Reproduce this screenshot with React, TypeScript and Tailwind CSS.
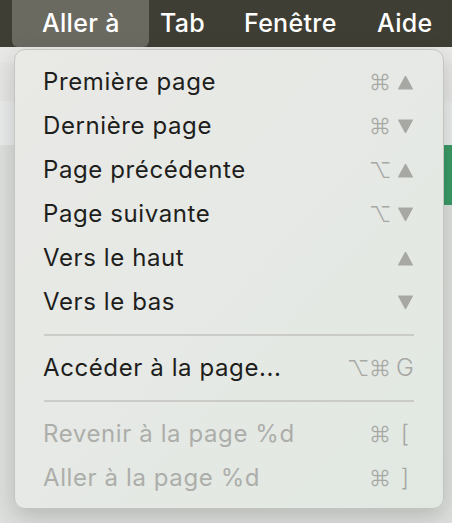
import React from "react";

type Key = "up" | "down" | string;

type Item = {
  label: string;
  mods?: string;
  keyGlyph?: Key;
  disabled?: boolean;
};

const GROUPS: Item[][] = [
  [
    { label: "Première page", mods: "⌘", keyGlyph: "up" },
    { label: "Dernière page", mods: "⌘", keyGlyph: "down" },
    { label: "Page précédente", mods: "⌥", keyGlyph: "up" },
    { label: "Page suivante", mods: "⌥", keyGlyph: "down" },
    { label: "Vers le haut", keyGlyph: "up" },
    { label: "Vers le bas", keyGlyph: "down" },
  ],
  [{ label: "Accéder à la page...", mods: "⌥⌘", keyGlyph: "G" }],
  [
    { label: "Revenir à la page %d", mods: "⌘", keyGlyph: "[", disabled: true },
    { label: "Aller à la page %d", mods: "⌘", keyGlyph: "]", disabled: true },
  ],
];

function Triangle({ down }: { down?: boolean }) {
  return (
    <svg width="17" height="15" viewBox="0 0 17 15" className="fill-[#a7a8a4]">
      {down ? (
        <path d="M1.2 1.5 Q0.4 0.5 1.8 0.5 L15.2 0.5 Q16.6 0.5 15.8 1.5 L9.3 13.6 Q8.5 14.8 7.7 13.6 Z" />
      ) : (
        <path d="M1.2 13.5 Q0.4 14.5 1.8 14.5 L15.2 14.5 Q16.6 14.5 15.8 13.5 L9.3 1.4 Q8.5 0.2 7.7 1.4 Z" />
      )}
    </svg>
  );
}

function Shortcut({ mods, keyGlyph }: { mods?: string; keyGlyph?: Key }) {
  return (
    <span className="flex items-center text-[24px] font-light text-[#a7a8a4]">
      <span className="flex gap-[2px]">
        {mods?.split("").map((m, i) => (
          <span key={i} className="w-[20px] text-center text-[22px]">
            {m}
          </span>
        ))}
      </span>
      <span className="ml-[5px] flex w-[22px] justify-center">
        {keyGlyph === "up" ? (
          <Triangle />
        ) : keyGlyph === "down" ? (
          <Triangle down />
        ) : (
          keyGlyph
        )}
      </span>
    </span>
  );
}

function MenuRow({ item }: { item: Item }) {
  return (
    <div className="flex h-[44px] items-center justify-between pl-[28px] pr-[27px]">
      <span
        className={
          item.disabled
            ? "text-[24px] tracking-[0.6px] text-[#adaeaa]"
            : "text-[24px] tracking-[0.6px] text-[#1e1e1c]"
        }
      >
        {item.label}
      </span>
      <Shortcut mods={item.mods} keyGlyph={item.keyGlyph} />
    </div>
  );
}

export default function App() {
  return (
    <div
      className="relative h-[523px] w-[452px] overflow-hidden bg-[#dde0dd]"
      style={{ fontFamily: "Inter, 'Noto Sans', sans-serif" }}
    >
      {/* Menu bar */}
      <div className="flex h-[47px] items-stretch bg-[#3f3e34] text-[25px] font-medium tracking-[0.3px] text-white">
        <div className="ml-[12px] flex w-[137px] items-center rounded-b-[6px] bg-[#6b6a61] pl-[30px]">
          Aller à
        </div>
        <div className="ml-[11px] flex w-[84px] items-center">Tab</div>
        <div className="flex w-[133px] items-center">Fenêtre</div>
        <div className="flex items-center">Aide</div>
      </div>

      {/* App content behind the menu */}
      <div className="h-[16px] bg-[#e9eae8]" />
      <div className="h-[38px] bg-[#e6e7e5]" />
      <div className="flex h-[44px] bg-[#e9ecea]" />
      <div className="flex h-[60px] justify-end">
        <div className="w-[20px] rounded-l-[10px] bg-[#3a9a66]" />
      </div>

      {/* Dropdown menu */}
      <div className="absolute left-[14px] top-[49px] w-[430px] rounded-[11px] border border-[#c4c5c1] bg-gradient-to-br from-[#e9e9e6] via-[#e6e9e5] to-[#e1e8e2] pb-[8px] pt-[10px] shadow-[0_8px_24px_rgba(0,0,0,0.18)]">
        {GROUPS.map((group, gi) => (
          <div key={gi}>
            {gi > 0 && (
              <div className="flex h-[22px] items-center px-[29px]">
                <div className="h-[1.5px] w-full bg-[#cbccc8]" />
              </div>
            )}
            {group.map((item) => (
              <MenuRow key={item.label} item={item} />
            ))}
          </div>
        ))}
      </div>
    </div>
  );
}
